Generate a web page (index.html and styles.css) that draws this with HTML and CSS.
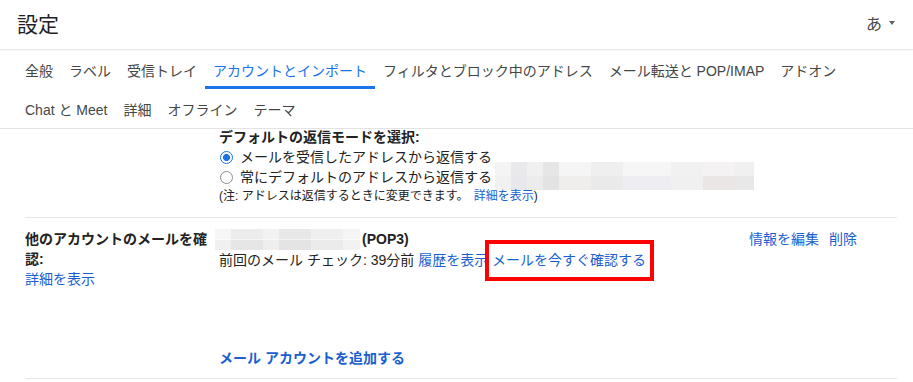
FILE: index.html
```html
<!DOCTYPE html>
<html lang="ja">

<head>
    <meta charset="UTF-8">
    <meta name="viewport" content="width=device-width, initial-scale=1.0">
    <title>設定 - アカウントとインポート</title>
    <link rel="stylesheet" href="styles.css">
</head>

<body>
    <div class="settings">
        <header class="topbar">
            <h1>設定</h1>
            <div class="lang">あ<span class="caret"></span></div>
        </header>

        <nav class="tabs">
            <a class="tab">全般</a>
            <a class="tab">ラベル</a>
            <a class="tab">受信トレイ</a>
            <a class="tab active">アカウントとインポート</a>
            <a class="tab">フィルタとブロック中のアドレス</a>
            <a class="tab">メール転送と POP/IMAP</a>
            <a class="tab">アドオン</a>
            <a class="tab">Chat と Meet</a>
            <a class="tab">詳細</a>
            <a class="tab">オフライン</a>
            <a class="tab">テーマ</a>
        </nav>

        <div class="content">
            <div class="row row-reply">
                <div class="label"></div>
                <div class="value">
                    <b>デフォルトの返信モードを選択:</b>
                    <div class="option"><span class="radio checked"></span>メールを受信したアドレスから返信する</div>
                    <div class="option"><span class="radio"></span>常にデフォルトのアドレスから返信する<span class="redact redact-wide"></span></div>
                    <div class="note">(注: アドレスは返信するときに変更できます。 <a class="link">詳細を表示</a>)</div>
                </div>
                <div class="actions"></div>
            </div>

            <div class="row row-accounts">
                <div class="label">
                    <b>他のアカウントのメールを確認:</b><br>
                    <a class="link">詳細を表示</a>
                </div>
                <div class="value">
                    <div><span class="redact redact-small"></span><b>(POP3)</b></div>
                    <div>前回のメール チェック: 39分前 <a class="link">履歴を表示</a> <a class="link marked">メールを今すぐ確認する</a></div>
                    <div class="add-account"><a class="link"><b>メール アカウントを追加する</b></a></div>
                </div>
                <div class="actions">
                    <a class="link">情報を編集</a>
                    <a class="link">削除</a>
                </div>
            </div>
        </div>
    </div>
</body>

</html>
```

FILE: styles.css
```css
body {
    margin: 0;
    background-color: #ffffff;
    font-family: "Liberation Sans", "Noto Sans CJK JP", sans-serif;
    color: #222222;
}

.settings {
    width: 913px;
    height: 382px;
    overflow: hidden;
}

.topbar {
    height: 49px;
    display: flex;
    align-items: center;
    justify-content: space-between;
    padding: 0 18px 0 17px;
    border-bottom: 1px solid #ebebeb;
    box-shadow: 0 1px 2px rgba(0, 0, 0, 0.04);
}

.topbar h1 {
    margin: 0;
    font-family: "Noto Sans CJK JP", sans-serif;
    font-size: 21px;
    font-weight: 400;
    color: #1f1f1f;
    line-height: 1;
    padding-bottom: 3px;
}

.lang {
    display: flex;
    align-items: center;
    gap: 7px;
    font-family: "Noto Sans CJK JP", sans-serif;
    font-size: 16px;
    color: #444746;
    padding-bottom: 4px;
}

.caret {
    width: 0;
    height: 0;
    border-left: 3.5px solid transparent;
    border-right: 3.5px solid transparent;
    border-top: 4px solid #5f6368;
}

.tabs {
    display: flex;
    flex-wrap: wrap;
    padding: 0 0 0 17px;
    border-bottom: 1px solid #e3e3e3;
}

.tab {
    height: 39px;
    display: flex;
    align-items: center;
    padding: 3px 8px 0;
    box-sizing: border-box;
    font-family: "Liberation Sans", "Noto Sans CJK JP", sans-serif;
    font-size: 14px;
    color: #444746;
    border-bottom: 3px solid transparent;
}

.tab.active {
    color: #1a73e8;
    border-bottom-color: #1a73e8;
}

.content {
    padding: 0 16px 0 25px;
    font-size: 14px;
}

.row {
    display: grid;
    grid-template-columns: 194px 1fr 148px;
    border-bottom: 1px solid #e6e6e6;
    line-height: 20px;
}

.row-reply {
    margin-top: -2px;
    padding-bottom: 11px;
}

.row-accounts {
    padding: 11px 0 10px;
}

.option {
    height: 20px;
    white-space: nowrap;
}

.radio {
    display: inline-block;
    width: 13px;
    height: 13px;
    margin: 0 7px 0 1px;
    vertical-align: -2px;
    border-radius: 50%;
    border: 1px solid #8c8c8c;
    box-sizing: border-box;
}

.radio.checked {
    border-color: #1a73e8;
    background: radial-gradient(circle, #1a73e8 0 3.2px, #ffffff 3.8px);
}

.note {
    font-size: 12px;
    line-height: 19px;
}

.link {
    color: #1a5fd0;
    cursor: pointer;
}

.note .link {
    margin-left: 2px;
}

.redact {
    display: inline-block;
    vertical-align: top;
}

.redact-wide {
    width: 259px;
    height: 28px;
    margin: -5px 0 -3px 3px;
    background:
        linear-gradient(90deg, #f4f4f4 0 16px, #e9e9ec 16px 32px, #f0f0f0 32px 48px, #e6e6e6 48px 64px, #f5f5f5 64px 96px, #efefef 96px 128px, #f6f6f6 128px 176px, #f1f1f1 176px 208px, #f4f2f2 208px 240px, #f0f0f0 240px 259px) top / 100% 50% no-repeat,
        linear-gradient(90deg, #f1f1f1 0 16px, #e8e8ec 16px 32px, #ececec 32px 48px, #e3e3e3 48px 64px, #f0eded 64px 96px, #eaeaea 96px 128px, #eeeef2 128px 176px, #f0f0f0 176px 208px, #ebe6e6 208px 240px, #e8e8e8 240px 259px) bottom / 100% 50% no-repeat;
}

.redact-small {
    width: 145px;
    height: 21px;
    margin: 0 2px 0 -4px;
    background:
        linear-gradient(90deg, #f6f6f6 0 16px, #ececec 16px 48px, #f2f2f2 48px 64px, #e8e8e8 64px 96px, #efefef 96px 128px, #f5f5f5 128px 145px) top / 100% 50% no-repeat,
        linear-gradient(90deg, #f0f0f0 0 16px, #e6e6e6 16px 48px, #eeeeee 48px 64px, #e4e4e4 64px 96px, #ebebeb 96px 128px, #f2f2f2 128px 145px) bottom / 100% 50% no-repeat;
}

.marked {
    position: relative;
}

.marked::after {
    content: "";
    position: absolute;
    top: -12px;
    bottom: -13px;
    left: -7px;
    right: -8px;
    border: 4px solid #ff0000;
}

.add-account {
    margin-top: 78px;
}

.actions {
    display: flex;
    gap: 10px;
    align-items: flex-start;
}
```
